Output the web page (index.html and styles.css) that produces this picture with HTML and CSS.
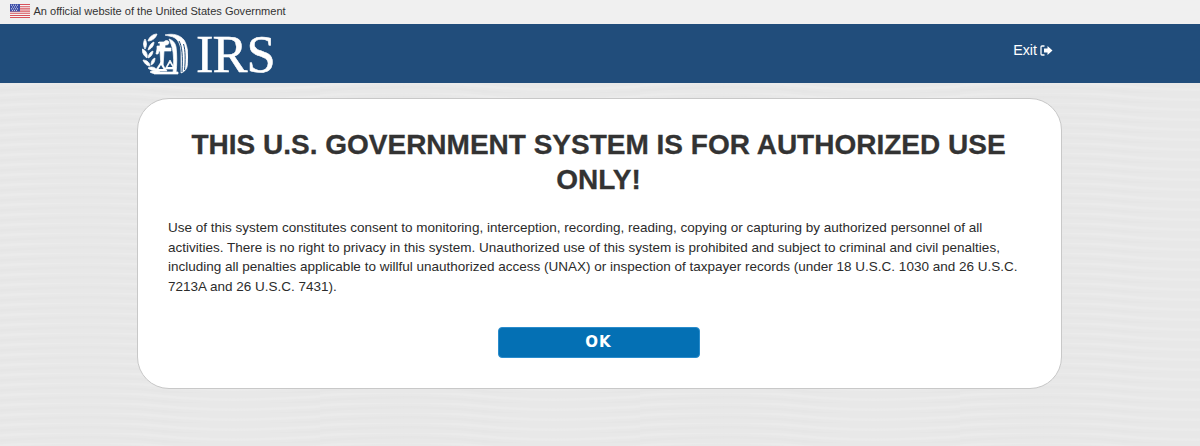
FILE: index.html
```html
<!DOCTYPE html>
<html lang="en">
<head>
<meta charset="utf-8">
<title>IRS</title>
<link rel="stylesheet" href="styles.css">
</head>
<body>
<div class="gov-banner">
  <svg class="flag" viewBox="0 0 20 14" width="20" height="14" aria-hidden="true">
    <rect width="20" height="14" fill="#f4f4f4"/>
    <path d="M0 .5h20M0 2.700h20M0 4.900h20M0 7.100h20M0 9.300h20M0 11.500h20M0 13.500h20" stroke="#d8505a" stroke-width="1.100"/>
    <rect width="10" height="7.500" fill="#3d4fa8"/>
    <path d="M1 1.200h1M3 1.200h1M5 1.200h1M7 1.200h1M2 3h1M4 3h1M6 3h1M1 4.800h1M3 4.800h1M5 4.800h1M7 4.800h1M2 6.400h1M4 6.400h1M6 6.400h1" stroke="#e8e8f4" stroke-width=".9"/>
  </svg>
  <span class="gov-text">An official website of the United States Government</span>
</div>
<header class="site-header">
  <div class="logo">
    <svg class="seal" viewBox="0 0 46 42" width="46" height="42" aria-hidden="true">
      <g fill="#fff" stroke="#fff" stroke-width=".7">
        <path d="M15 1C11 1 7 4 6 8c4 0 8-3 9-7z"/>
        <path d="M3 6C1 9 1 13 3 16c2-3 2-7 0-10z"/>
        <path d="M12 9c-3 1-5 4-6 8 3-1 6-4 6-8z"/>
        <path d="M0 16c0 4 2 7 5 9 1-4-1-8-5-9z"/>
        <path d="M11 18c-3 1-5 4-5 7 3-1 5-4 5-7z"/>
        <path d="M1 27c1 3 4 6 7 6 0-3-3-6-7-6z"/>
        <path d="M13 25c-3 1-4 4-4 7 3-1 4-4 4-7z"/>
        <path d="M6 35c2 2 5 3 9 2-2-3-6-4-9-2z"/>
        <path d="M8 39c3 2 7 2 10 0-3-2-7-2-10 0z"/>
        <path d="M23 2c8-2 15 0 19 5 4 6 5 18 3 27-1 3-3 5-6 6V20c0-7-2-12-6-15-3-2-7-2-10-3z"/>
        <path d="M27 6c3 1 6 3 7 8 1 7 1 18 0 26h-3c1-9 1-19-1-26-1-3-2-6-3-8z"/>
        <path d="M17 9h5c1-2 4-2 5 0 0 2-1 3-3 3h-1v3h6v3h-7l-1 16h-2l-1-16h-1l-1 3h-2l1-5v-3h3v-3h-2z"/>
        <path d="M19 29l-6 9h12zM28 27l-5 9h10z"/>
        <path d="M12 39h24v2H12z"/>
      </g>
      <path d="M37 8c3 5 4 15 3 31M41.500 11c2 6 2 17 1 26" fill="none" stroke="#214d7b" stroke-width="1"/>
      <path d="M19 32l-2.500 4h5zM28 30l-2.500 4h5z" fill="#214d7b"/>
    </svg>
    <span class="wordmark">IRS</span>
  </div>
  <a class="exit" href="#">Exit
    <svg class="exit-icon" viewBox="0 0 13 11" width="13" height="11" aria-hidden="true">
      <path d="M4.500 1H2a1 1 0 0 0-1 1v7a1 1 0 0 0 1 1h2.500" fill="none" stroke="#fff" stroke-width="1.300"/>
      <path d="M4 3.500h3.500V1l5 4.500-5 4.500V7.500H4z" fill="#fff"/>
    </svg>
  </a>
</header>
<main class="page">
  <section class="card">
    <h1 class="title">THIS U.S. GOVERNMENT SYSTEM IS FOR AUTHORIZED USE ONLY!</h1>
    <p class="notice">Use of this system constitutes consent to monitoring, interception, recording, reading, copying or capturing by authorized personnel of all activities. There is no right to privacy in this system. Unauthorized use of this system is prohibited and subject to criminal and civil penalties, including all penalties applicable to willful unauthorized access (UNAX) or inspection of taxpayer records (under 18 U.S.C. 1030 and 26 U.S.C. 7213A and 26 U.S.C. 7431).</p>
    <button class="ok" type="button">OK</button>
  </section>
</main>
</body>
</html>
```
FILE: styles.css
```css
* { box-sizing: border-box; }
html, body { margin: 0; height: 100%; }
body {
  font-family: "Liberation Sans", Arial, sans-serif;
  color: #333;
  background-color: #e8e8e8;
  overflow: hidden;
}
.gov-banner {
  height: 24px;
  background: #f0f0f0;
  display: flex;
  align-items: center;
  gap: 4px;
  padding-left: 9.500px;
}
.flag { flex: none; margin-top: -3px; }
.gov-text { font-size: 11.050px; color: #333; margin-top: -2px; }
.site-header {
  height: 59px;
  background: #214d7b;
  display: flex;
  align-items: center;
  justify-content: space-between;
  padding: 0 147px 0 142px;
}
.logo { display: flex; align-items: center; gap: 8px; color: #fff; }
.seal { flex: none; }
.wordmark {
  font-family: "Liberation Serif", "Times New Roman", serif;
  font-size: 52.500px;
  line-height: 50px;
  letter-spacing: -1px;
  color: #fff;
  -webkit-text-stroke: 0.5px #fff;
}
.exit {
  color: #fff;
  font-size: 14.300px;
  text-decoration: none;
  display: flex;
  align-items: center;
  gap: 3px;
  margin-top: -7px;
}
.exit-icon { flex: none; }
.page {
  height: 363px;
  padding: 15px 139px 0 137px;
  background-color: #e8e8e8;
  background-image: url("data:image/svg+xml,%3Csvg xmlns='http://www.w3.org/2000/svg' width='320' height='10'%3E%3Cg fill='none' stroke-width='2.500'%3E%3Cpath stroke='%23ebebeb' d='M-10 3c80-5 120-5 170 0s90 5 170 0'/%3E%3Cpath stroke='%23e6e6e6' d='M-10 8c80-5 120-5 170 0s90 5 170 0'/%3E%3C/g%3E%3C/svg%3E");
}
.card {
  height: 291px;
  width: 925px;
  background: #fff;
  border: 1px solid #c8c8c8;
  border-radius: 32px;
  padding: 28px 32px 0 30px;
  display: flex;
  flex-direction: column;
  align-items: center;
}
.title {
  margin: 0;
  width: 100%;
  font-size: 28px;
  line-height: 35px;
  font-weight: 700;
  text-align: center;
  color: #333;
  -webkit-text-stroke: 0.3px #333;
}
.notice {
  margin: 21px 0 0;
  width: 100%;
  font-size: 13.500px;
  line-height: 19.500px;
  color: #2b2b2b;
}
.ok {
  margin-top: 31px;
  width: 202px;
  height: 31px;
  background: #0470b4;
  border: 1px solid #2a8ccc;
  border-radius: 4px;
  color: #fff;
  font-family: "DejaVu Sans", Verdana, sans-serif;
  font-size: 15px;
  font-weight: 700;
  letter-spacing: 1px;
  padding: 0 0 2px;
}
```
